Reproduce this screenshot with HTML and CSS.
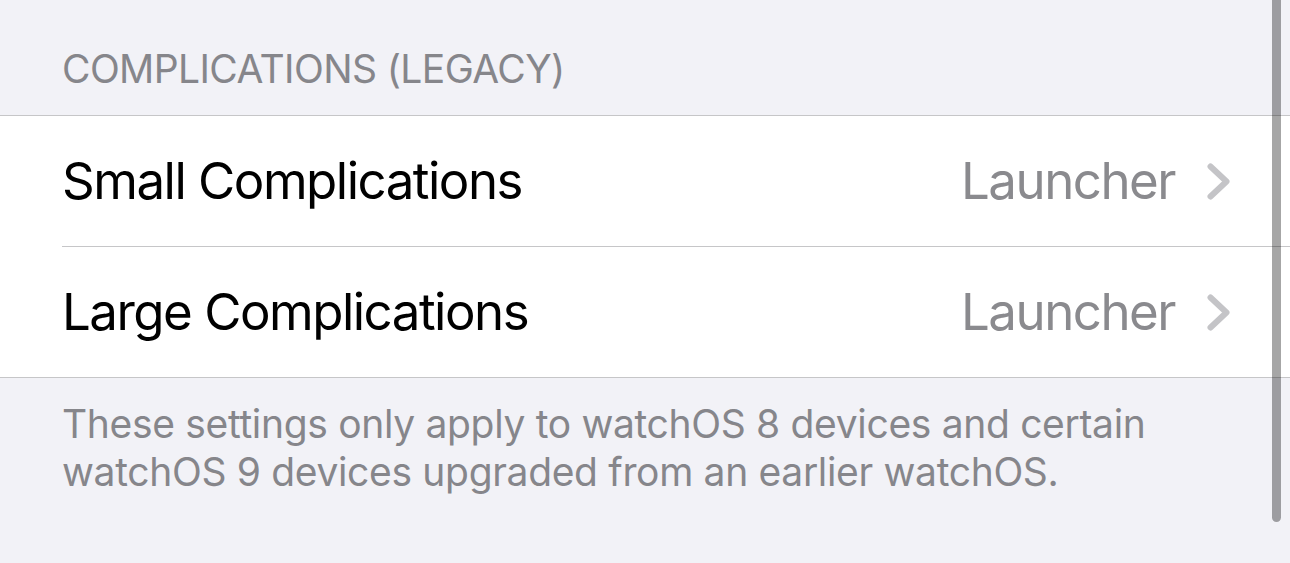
FILE: index.html
```html
<!DOCTYPE html>
<html lang="en">
<head>
<meta charset="utf-8">
<title>Complications</title>
<link rel="stylesheet" href="styles.css">
</head>
<body>
<div class="screen">
  <div class="section-header">COMPLICATIONS (LEGACY)</div>
  <div class="group">
    <div class="row">
      <span class="row-title">Small Complications</span>
      <span class="row-value">Launcher</span>
      <svg class="chevron" width="23" height="37" viewBox="0 0 23 37"><path d="M3.5 3.5 L19.5 18.5 L3.5 33.5" fill="none" stroke="#c4c4c7" stroke-width="6" stroke-linecap="round" stroke-linejoin="round"/></svg>
    </div>
    <div class="row">
      <span class="row-title">Large Complications</span>
      <span class="row-value">Launcher</span>
      <svg class="chevron" width="23" height="37" viewBox="0 0 23 37"><path d="M3.5 3.5 L19.5 18.5 L3.5 33.5" fill="none" stroke="#c4c4c7" stroke-width="6" stroke-linecap="round" stroke-linejoin="round"/></svg>
    </div>
  </div>
  <div class="section-footer">These settings only apply to watchOS 8 devices and certain watchOS 9 devices upgraded from an earlier watchOS.</div>
  <div class="scroll-indicator"></div>
</div>
</body>
</html>
```
FILE: styles.css
```css
html, body {
  margin: 0;
  padding: 0;
  background: #f2f2f7;
}
.screen {
  position: relative;
  width: 1290px;
  height: 563px;
  overflow: hidden;
  font-family: Inter, "Liberation Sans", sans-serif;
  background: #f2f2f7;
}
.section-header {
  height: 115px;
  box-sizing: border-box;
  display: flex;
  align-items: flex-end;
  padding: 0 62px 22px;
  font-size: 39px;
  line-height: 48px;
  color: #86868b;
  letter-spacing: -0.6px;
}
.group {
  background: #fff;
  border-top: 1px solid #c6c6c8;
  border-bottom: 1px solid #c6c6c8;
  padding-left: 62px;
}
.row {
  height: 130px;
  display: flex;
  align-items: center;
  padding-right: 60px;
  font-size: 51px;
  line-height: 60px;
  letter-spacing: -1.5px;
}
.row + .row {
  border-top: 1px solid #c6c6c8;
}
.row-title {
  flex: 1;
  color: #000;
}
.row-value {
  color: #8a8a8e;
  margin-right: 32px;
}
.chevron {
  display: block;
}
.section-footer {
  padding: 22px 62px 0;
  font-size: 39px;
  line-height: 48px;
  color: #86868b;
  letter-spacing: -0.33px;
}
.scroll-indicator {
  position: absolute;
  right: 9px;
  top: -10px;
  width: 9px;
  height: 532px;
  border-radius: 5px;
  background: rgba(0, 0, 0, 0.35);
}
```
